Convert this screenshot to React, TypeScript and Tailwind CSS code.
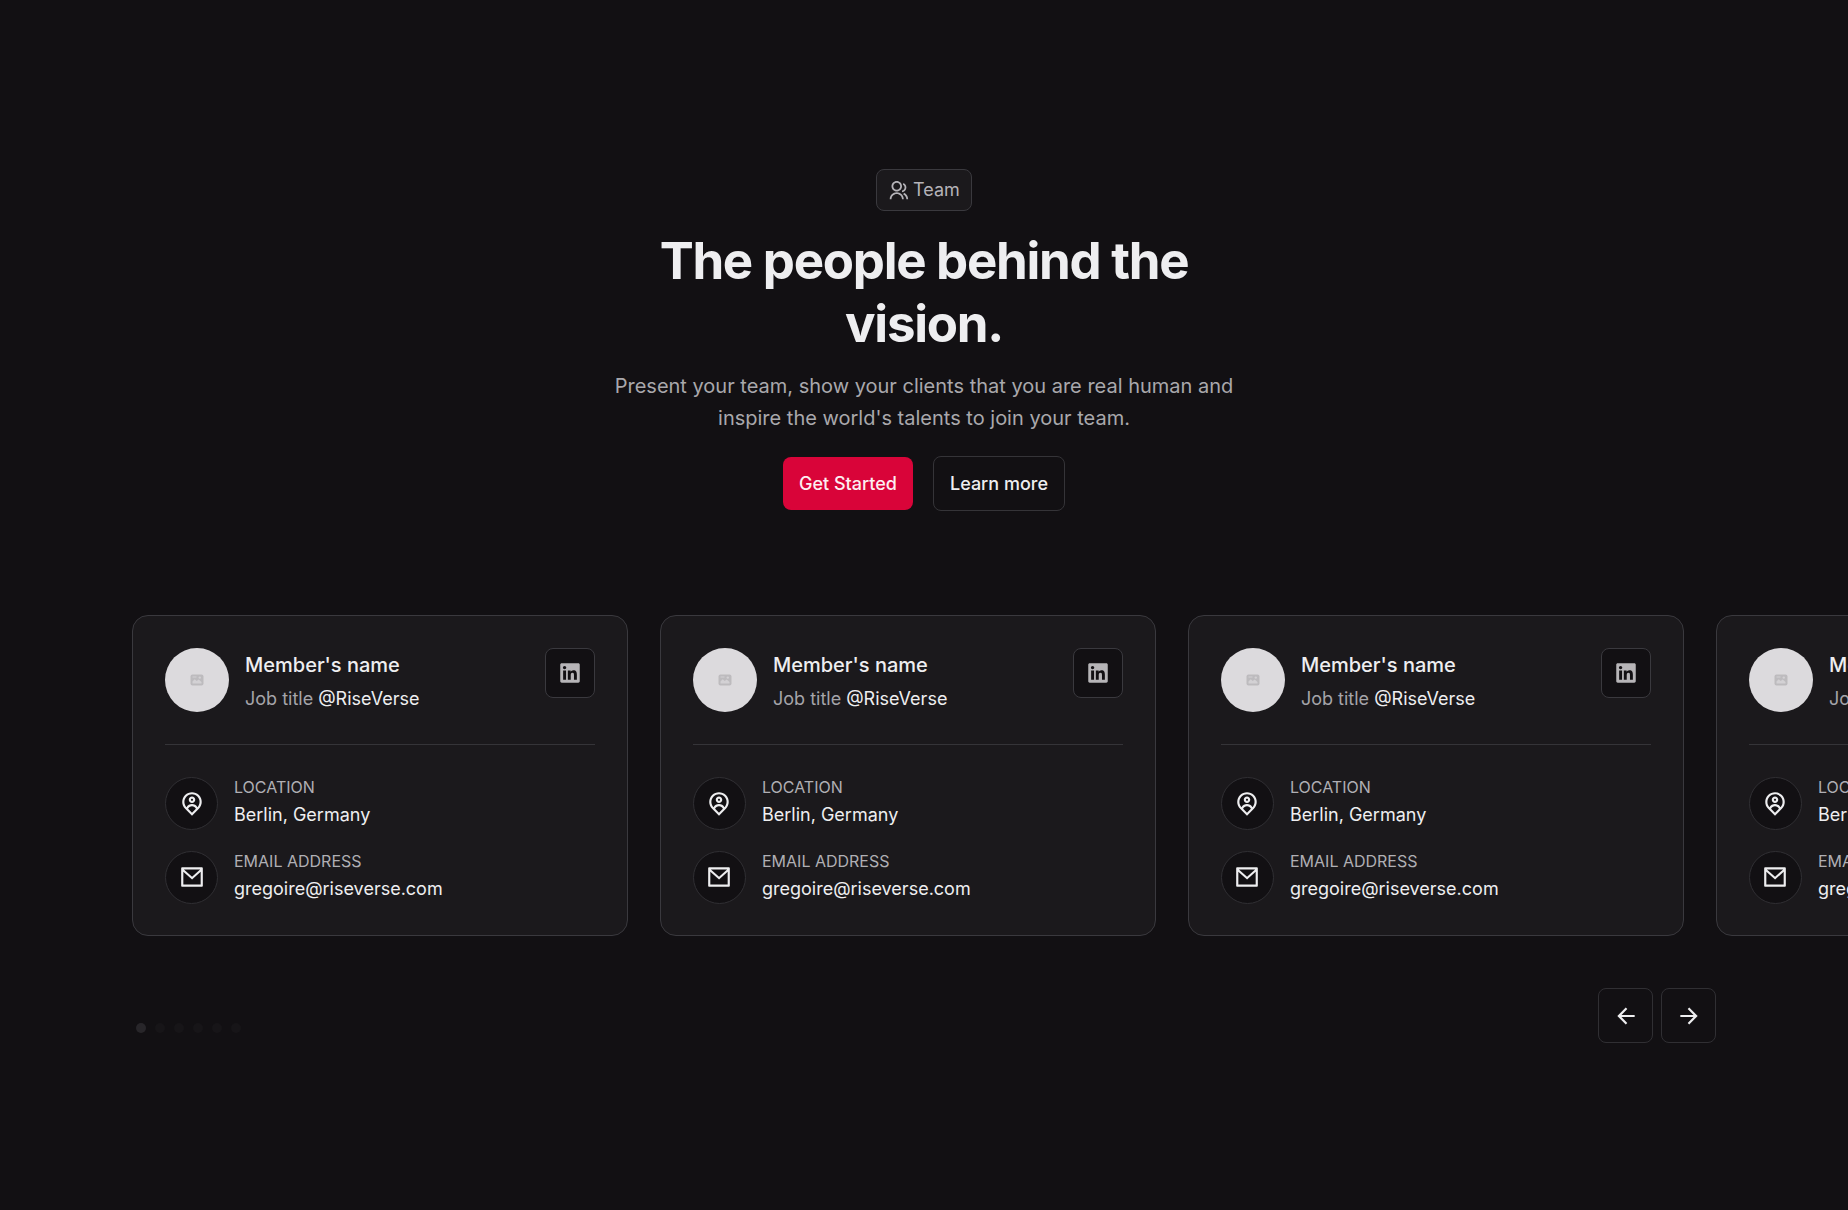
import React from 'react';
import {
  RiArrowLeftLine,
  RiArrowRightLine,
  RiGroupLine,
  RiLinkedinBoxFill,
  RiMailLine,
  RiMapPinUserLine,
} from 'react-icons/ri';
import type { IconType } from 'react-icons';

interface Member {
  id: number;
  name: string;
  title: string;
  company: string;
  location: string;
  email: string;
}

const SLIDES = [1, 2, 3, 4, 5, 6];

const members: Member[] = [1, 2, 3, 4].map((id) => ({
  id,
  name: "Member's name",
  title: 'Job title',
  company: '@RiseVerse',
  location: 'Berlin, Germany',
  email: 'gregoire@riseverse.com',
}));

interface InfoRowProps {
  icon: IconType;
  label: string;
  value: string;
}

function PlaceholderImage() {
  return (
    <svg viewBox="0 0 14 12" className="h-3 w-[14px]" aria-hidden="true">
      <rect x="0.5" y="0.5" width="13" height="11" rx="2" fill="#bdbbbe" />
      <path d="M2.5 9.5v-2l2.2-2.2 2 1.8 2-1.6 2.8 2.6v1.4z" fill="#d3d1d4" />
      <circle cx="9.8" cy="3.6" r="1.2" fill="#d3d1d4" />
      <path d="M2.5 3h4" stroke="#d3d1d4" strokeWidth="1" />
    </svg>
  );
}

function InfoRow({ icon: Icon, label, value }: InfoRowProps) {
  return (
    <div className="flex items-center gap-4">
      <div className="flex size-[53px] shrink-0 items-center justify-center rounded-full border border-[#302f33] bg-[#121013]">
        <Icon className="size-[26px] text-[#eeeef0]" />
      </div>
      <div>
        <dt className="text-base leading-6 text-[#b0afb4] uppercase">{label}</dt>
        <dd className="text-lg leading-8 text-[#eeeef0]">{value}</dd>
      </div>
    </div>
  );
}

function MemberCard({ member }: { member: Member }) {
  return (
    <li className="w-[calc((100%-96px)/3)] shrink-0 rounded-2xl border border-[#3a393e] bg-[#1b191c] px-8 pt-8 pb-[30px]">
      <div className="flex items-start border-b border-[#353438] pb-7">
        <div className="flex size-16 shrink-0 items-center justify-center rounded-full bg-[#dcdadd]">
          <PlaceholderImage />
        </div>
        <div className="ml-4 flex-1 whitespace-nowrap">
          <h3 className="text-xl leading-[34px] font-medium text-[#eeeef0]">{member.name}</h3>
          <p className="text-lg leading-[34px] text-[#a5a4a9]">
            {member.title} <span className="text-[#eeeef0]">{member.company}</span>
          </p>
        </div>
        <a
          href="#linkedin"
          aria-label="LinkedIn"
          className="flex size-[50px] shrink-0 items-center justify-center rounded-lg border border-[#3a393e] bg-[#121013]"
        >
          <RiLinkedinBoxFill className="size-[26px] text-[#b7b5b8]" />
        </a>
      </div>
      <dl className="mt-[30px] flex flex-col gap-[18px]">
        <InfoRow icon={RiMapPinUserLine} label="Location" value={member.location} />
        <InfoRow icon={RiMailLine} label="Email address" value={member.email} />
      </dl>
    </li>
  );
}

export default function App() {
  return (
    <main className="min-h-screen overflow-hidden bg-[#121013] px-[132px] pt-[169px] pb-[150px] font-[Inter,sans-serif]">
      {/* Header */}
      <header className="mx-auto flex max-w-[634px] flex-col items-center text-center">
        <div className="flex h-[42px] items-center gap-1 rounded-lg border border-[#3a393e] bg-[#1b191c] px-[11px] text-lg text-[#b5b3b8]">
          <RiGroupLine className="size-[21px]" />
          Team
        </div>
        <h1 className="mt-[18px] text-[51px] leading-[63px] font-bold tracking-tight text-[#eeeef0]">
          The people behind the vision.
        </h1>
        <p className="mt-[15px] text-xl leading-8 text-[#a9a8ac]">
          Present your team, show your clients that you are real human and inspire the world's talents to join your team.
        </p>
        <div className="mt-[22px] flex items-center gap-5">
          <button type="button" className="h-[53px] rounded-lg bg-[#d90439] px-4 text-lg font-medium text-[#fdeef1]">
            Get Started
          </button>
          <button type="button" className="h-[55px] rounded-lg border border-[#353438] px-4 text-lg font-medium text-[#eeeef0]">
            Learn more
          </button>
        </div>
      </header>

      {/* Carousel */}
      <ul className="mt-[104px] flex gap-8">
        {members.map((member) => (
          <MemberCard key={member.id} member={member} />
        ))}
      </ul>

      {/* Pagination */}
      <div className="mt-[52px] flex items-center justify-between">
        <div className="mt-6 ml-1 flex gap-[9px]">
          {SLIDES.map((slide) => (
            <button
              key={slide}
              type="button"
              aria-label={`Slide ${slide}`}
              className={slide === 1 ? 'size-[10px] rounded-full bg-[#28262a]' : 'size-[10px] rounded-full bg-[#171518]'}
            />
          ))}
        </div>
        <div className="flex gap-2">
          <button
            type="button"
            aria-label="Previous"
            className="flex size-[55px] items-center justify-center rounded-lg border border-[#302f33] text-[#eeeef0]"
          >
            <RiArrowLeftLine className="size-[26px]" />
          </button>
          <button
            type="button"
            aria-label="Next"
            className="flex size-[55px] items-center justify-center rounded-lg border border-[#302f33] text-[#eeeef0]"
          >
            <RiArrowRightLine className="size-[26px]" />
          </button>
        </div>
      </div>
    </main>
  );
}
